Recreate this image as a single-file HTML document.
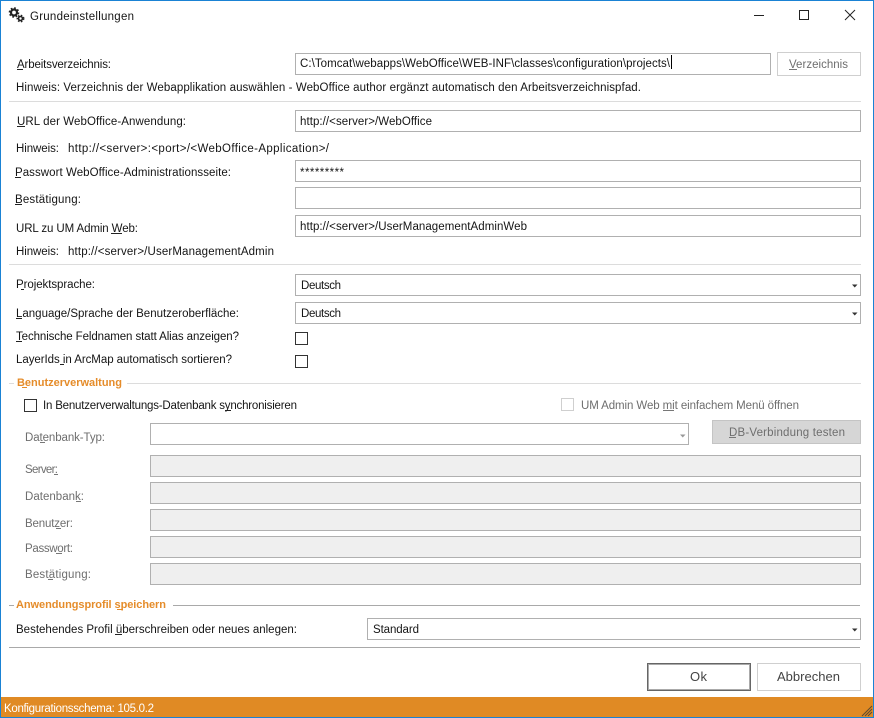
<!DOCTYPE html>
<html lang="de"><head><meta charset="utf-8"><title>Grundeinstellungen</title>
<style>
html,body{margin:0;padding:0;background:#fff;width:874px;height:718px;overflow:hidden}
svg{display:block}
text{font-family:"Liberation Sans",sans-serif;font-size:11.5px;fill:#151515;white-space:pre}
.g{fill:#6e6e6e}
.o{fill:#e58c2a;font-weight:bold;font-size:11px}
.bt{font-size:13px;fill:#444}
.b{fill:#fff;stroke:#b0b0b0;shape-rendering:crispEdges}
.d{fill:#efefef;stroke:#b0b0b0;shape-rendering:crispEdges}
.u{shape-rendering:crispEdges;fill:#222}
.ug{shape-rendering:crispEdges;fill:#777}
.l{shape-rendering:crispEdges;fill:#dcdcdc}
.l2{shape-rendering:crispEdges;fill:#a9a9a9}
</style></head><body>
<svg width="874" height="718" viewBox="0 0 874 718" xmlns="http://www.w3.org/2000/svg">
<rect width="874" height="718" fill="#1a82d4" shape-rendering="crispEdges"/>
<rect x="1" y="1" width="872" height="716" fill="#fff" shape-rendering="crispEdges"/>

<!-- title bar -->
<g fill="none" stroke="#222">
<circle cx="14" cy="12.5" r="3" stroke-width="2.2"/>
<circle cx="14" cy="12.5" r="4.4" stroke-width="1.8" stroke-dasharray="1.7 1.75"/>
<circle cx="20.5" cy="18.5" r="2" stroke-width="1.6"/>
<circle cx="20.5" cy="18.5" r="3.2" stroke-width="1.5" stroke-dasharray="1.5 1.5"/>
</g>
<text x="30" y="20" textLength="104">Grundeinstellungen</text>
<rect x="754" y="15" width="10" height="1" fill="#222" shape-rendering="crispEdges"/>
<rect x="799.5" y="10.5" width="9" height="9" fill="none" stroke="#222" shape-rendering="crispEdges"/>
<path d="M845 10L855 20M855 10L845 20" stroke="#222" stroke-width="1" fill="none"/>

<!-- Arbeitsverzeichnis -->
<text x="17" y="68" textLength="94">Arbeitsverzeichnis:</text>
<rect class="u" x="17" y="69" width="6" height="1"/>
<rect class="b" x="295.5" y="53.5" width="475" height="21"/>
<text x="300" y="67" textLength="370">C:\Tomcat\webapps\WebOffice\WEB-INF\classes\configuration\projects\</text>
<rect x="671" y="55" width="1" height="14" fill="#000" shape-rendering="crispEdges"/>
<rect x="777.5" y="52.5" width="83" height="23" fill="#fff" stroke="#cfcfcf" shape-rendering="crispEdges"/>
<text class="g" x="789" y="68" textLength="59">Verzeichnis</text>
<rect class="ug" x="789" y="69" width="8" height="1"/>
<text x="16" y="91" textLength="625">Hinweis: Verzeichnis der Webapplikation auswählen - WebOffice author ergänzt automatisch den Arbeitsverzeichnispfad.</text>
<rect class="l" x="9" y="101" width="852" height="1"/>

<!-- URL block -->
<text x="17" y="125" textLength="169">URL der WebOffice-Anwendung:</text>
<rect class="u" x="17" y="126" width="8" height="1"/>
<rect class="b" x="295.5" y="110.5" width="565" height="21"/>
<text x="300" y="125" textLength="132">http://&lt;server&gt;/WebOffice</text>
<text x="16" y="152" textLength="43">Hinweis:</text>
<text x="68" y="152" textLength="261">http://&lt;server&gt;:&lt;port&gt;/&lt;WebOffice-Application&gt;/</text>
<text x="15" y="176" textLength="216">Passwort WebOffice-Administrationsseite:</text>
<rect class="u" x="15" y="177" width="6" height="1"/>
<rect class="b" x="295.5" y="160.5" width="565" height="21"/>
<text x="300" y="176" textLength="44">*********</text>
<text x="15" y="203" textLength="66">Bestätigung:</text>
<rect class="u" x="15" y="204" width="7" height="1"/>
<rect class="b" x="295.5" y="187.5" width="565" height="21"/>
<text x="16" y="232" textLength="122">URL zu UM Admin Web:</text>
<rect class="u" x="111" y="233" width="11" height="1"/>
<rect class="b" x="295.5" y="215.5" width="565" height="21"/>
<text x="300" y="230" textLength="227">http://&lt;server&gt;/UserManagementAdminWeb</text>
<text x="16" y="255" textLength="43">Hinweis:</text>
<text x="68" y="255" textLength="206">http://&lt;server&gt;/UserManagementAdmin</text>
<rect class="l" x="9" y="264" width="852" height="1"/>

<!-- language -->
<text x="16" y="288" textLength="79">Projektsprache:</text>
<rect class="u" x="21" y="289" width="3" height="1"/>
<rect class="b" x="295.5" y="274.5" width="565" height="21"/>
<text x="301" y="289" textLength="40">Deutsch</text>
<path d="M852 284.5h5.5l-2.75 3z" fill="#333"/>
<text x="16" y="317" textLength="223">Language/Sprache der Benutzeroberfläche:</text>
<rect class="u" x="16" y="318" width="6" height="1"/>
<rect class="b" x="295.5" y="302.5" width="565" height="21"/>
<text x="301" y="317" textLength="40">Deutsch</text>
<path d="M852 312.5h5.5l-2.75 3z" fill="#333"/>
<text x="16" y="340" textLength="223">Technische Feldnamen statt Alias anzeigen?</text>
<rect class="u" x="16" y="341" width="6" height="1"/>
<rect x="295.5" y="332.5" width="12" height="12" fill="#fff" stroke="#333" shape-rendering="crispEdges"/>
<text x="16" y="363" textLength="216">LayerIds in ArcMap automatisch sortieren?</text>
<rect class="u" x="60" y="364" width="4" height="1"/>
<rect x="295.5" y="355.5" width="12" height="12" fill="#fff" stroke="#333" shape-rendering="crispEdges"/>

<!-- Benutzerverwaltung -->
<rect class="l" x="9" y="383" width="5" height="1"/>
<rect class="l" x="127" y="383" width="734" height="1"/>
<text class="o" x="17" y="386" textLength="105">Benutzerverwaltung</text>
<rect x="22" y="387" width="5" height="1" fill="#e58c2a" shape-rendering="crispEdges"/>
<rect x="24.5" y="399.5" width="12" height="12" fill="#fff" stroke="#333" shape-rendering="crispEdges"/>
<text x="43" y="409" textLength="254">In Benutzerverwaltungs-Datenbank synchronisieren</text>
<rect class="u" x="225" y="410" width="6" height="1"/>
<rect x="561.5" y="398.5" width="12" height="12" fill="#fff" stroke="#cfcfcf" shape-rendering="crispEdges"/>
<text class="g" x="581" y="409" textLength="218">UM Admin Web mit einfachem Menü öffnen</text>
<rect class="ug" x="663" y="410" width="11" height="1"/>

<text class="g" x="25" y="441" textLength="80">Datenbank-Typ:</text>
<rect class="ug" x="40" y="442" width="5" height="1"/>
<rect class="b" x="150.5" y="423.5" width="538" height="21"/>
<path d="M680 434.5h5.5l-2.75 3z" fill="#999"/>
<rect x="712.5" y="420.5" width="148" height="23" fill="#d6d6d6" stroke="#c4c4c4" shape-rendering="crispEdges"/>
<text class="g" x="729" y="436" textLength="116">DB-Verbindung testen</text>
<rect class="ug" x="729" y="437" width="7" height="1"/>

<text class="g" x="25" y="473" textLength="33">Server:</text>
<rect class="ug" x="54" y="474" width="4" height="1"/>
<rect class="d" x="150.5" y="455.5" width="710" height="21"/>
<text class="g" x="25" y="500" textLength="59">Datenbank:</text>
<rect class="ug" x="76" y="501" width="5" height="1"/>
<rect class="d" x="150.5" y="482.5" width="710" height="21"/>
<text class="g" x="25" y="527" textLength="48">Benutzer:</text>
<rect class="ug" x="56" y="528" width="5" height="1"/>
<rect class="d" x="150.5" y="509.5" width="710" height="21"/>
<text class="g" x="25" y="552" textLength="48">Passwort:</text>
<rect class="ug" x="56" y="553" width="6" height="1"/>
<rect class="d" x="150.5" y="536.5" width="710" height="21"/>
<text class="g" x="25" y="578" textLength="66">Bestätigung:</text>
<rect class="ug" x="48" y="579" width="5" height="1"/>
<rect class="d" x="150.5" y="563.5" width="710" height="21"/>

<!-- Anwendungsprofil -->
<rect class="l2" x="9" y="605" width="5" height="1"/>
<rect class="l2" x="173" y="605" width="687" height="1"/>
<text class="o" x="16" y="608" textLength="150">Anwendungsprofil speichern</text>
<rect x="117" y="609" width="6" height="1" fill="#e58c2a" shape-rendering="crispEdges"/>
<text x="16" y="633" textLength="281">Bestehendes Profil überschreiben oder neues anlegen:</text>
<rect class="u" x="115" y="634" width="7" height="1"/>
<rect class="b" x="367.5" y="618.5" width="493" height="21"/>
<text x="373" y="633" textLength="46">Standard</text>
<path d="M852 628.5h5.5l-2.75 3z" fill="#333"/>
<rect class="l2" x="9" y="647" width="851" height="1"/>

<!-- buttons -->
<rect x="647.5" y="663.5" width="103" height="27" fill="#fff" stroke="#666" shape-rendering="crispEdges"/>
<rect x="648.5" y="664.5" width="101" height="25" fill="#fff" stroke="#aaa" shape-rendering="crispEdges"/>
<text class="bt" x="690" y="681" textLength="17">Ok</text>
<rect x="757.5" y="663.5" width="103" height="27" fill="#fff" stroke="#cfcfcf" shape-rendering="crispEdges"/>
<text class="bt" x="777" y="681" textLength="63">Abbrechen</text>

<!-- status bar -->
<rect x="1" y="697" width="872" height="20" fill="#e08a24" shape-rendering="crispEdges"/>
<text x="4" y="712" textLength="150" style="fill:#fff">Konfigurationsschema: 105.0.2</text>
<path d="M872 706L862 716M872 709L865 716M872 712L868 716" stroke="#5a4a30" stroke-width="1" fill="none"/>
</svg>
</body></html>
